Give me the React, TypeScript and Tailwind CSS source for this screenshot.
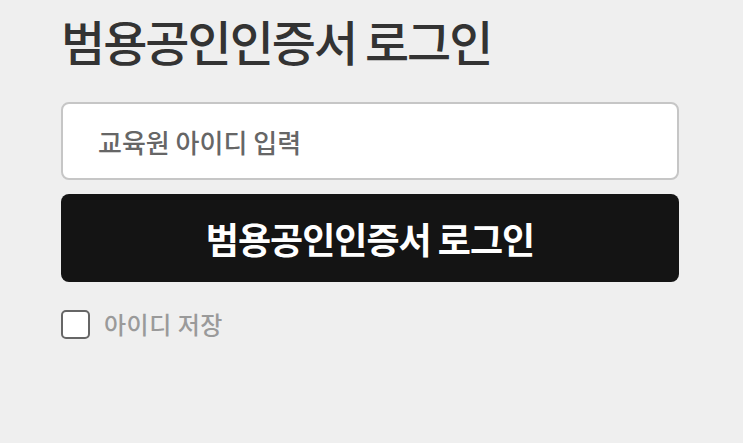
import React, { useState } from "react";

const font = {
  fontFamily: '"Noto Sans CJK KR", "Noto Sans", sans-serif',
};

export default function App() {
  const [saveId, setSaveId] = useState(false);

  return (
    <div
      className="min-h-screen w-full bg-[#efefef] px-[61px] pt-[8px]"
      style={font}
    >
      <h1 className="text-[48px] font-medium leading-[64px] tracking-[-2px] text-[#333333]">
        범용공인인증서 로그인
      </h1>

      <div className="mt-[30px] flex w-[618px] flex-col gap-[14px]">
        <input
          type="text"
          placeholder="교육원 아이디 입력"
          className="h-[78px] w-full rounded-[8px] border-2 border-[#c6c6c6] bg-white px-[35px] text-[26px] font-medium text-[#333] outline-none placeholder:text-[#666666]"
        />

        <button
          type="button"
          className="h-[88px] w-full rounded-[8px] bg-[#141414] text-[36px] font-bold tracking-[-1px] text-white"
        >
          범용공인인증서 로그인
        </button>
      </div>

      <label className="mt-[24px] flex items-center gap-[14px]">
        <span
          onClick={() => setSaveId(!saveId)}
          className="flex h-[29px] w-[29px] items-center justify-center rounded-[5px] border-2 border-[#666] bg-white"
        >
          {saveId && <span className="text-[16px] text-[#333]">✓</span>}
        </span>
        <span className="text-[24px] font-medium tracking-[0.5px] text-[#9a9a9a]">
          아이디 저장
        </span>
      </label>
    </div>
  );
}
